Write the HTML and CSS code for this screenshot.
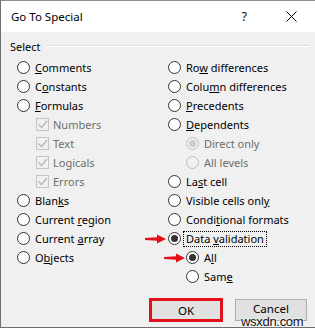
FILE: index.html
```html
<!DOCTYPE html>
<html>
<head>
<meta charset="utf-8">
<link rel="stylesheet" href="styles.css">
</head>
<body>
<div class="dialog">
  <div class="titlebar">
    <span class="title">Go To Special</span>
    <span class="help">?</span>
    <svg class="close" width="11" height="11" viewBox="0 0 11 11"><path d="M0.5 0.5 L10.5 10.5 M10.5 0.5 L0.5 10.5" stroke="#000" stroke-width="1" fill="none"/></svg>
  </div>
  <div class="body">
    <div class="group-label"><span>Select</span><div class="rule"></div></div>
    <div class="grid">
      <div class="col left">
        <div class="opt"><span class="radio"></span><span class="lbl"><u>C</u>omments</span></div>
        <div class="opt"><span class="radio"></span><span class="lbl">C<u>o</u>nstants</span></div>
        <div class="opt"><span class="radio"></span><span class="lbl"><u>F</u>ormulas</span></div>
        <div class="opt sub dis"><span class="check"><svg width="11" height="11" viewBox="0 0 11 11"><path d="M1.5 5.5 L4.5 8.5 L10 2" stroke="#b5b5b5" stroke-width="1.2" fill="none"/></svg></span><span class="lbl">Numbers</span></div>
        <div class="opt sub dis"><span class="check"><svg width="11" height="11" viewBox="0 0 11 11"><path d="M1.5 5.5 L4.5 8.5 L10 2" stroke="#b5b5b5" stroke-width="1.2" fill="none"/></svg></span><span class="lbl">Text</span></div>
        <div class="opt sub dis"><span class="check"><svg width="11" height="11" viewBox="0 0 11 11"><path d="M1.5 5.5 L4.5 8.5 L10 2" stroke="#b5b5b5" stroke-width="1.2" fill="none"/></svg></span><span class="lbl">Logicals</span></div>
        <div class="opt sub dis"><span class="check"><svg width="11" height="11" viewBox="0 0 11 11"><path d="M1.5 5.5 L4.5 8.5 L10 2" stroke="#b5b5b5" stroke-width="1.2" fill="none"/></svg></span><span class="lbl">Errors</span></div>
        <div class="opt"><span class="radio"></span><span class="lbl">Blan<u>k</u>s</span></div>
        <div class="opt"><span class="radio"></span><span class="lbl">Current <u>r</u>egion</span></div>
        <div class="opt"><span class="radio"></span><span class="lbl">Current <u>a</u>rray</span></div>
        <div class="opt"><span class="radio"></span><span class="lbl">O<u>b</u>jects</span></div>
      </div>
      <div class="col right">
        <div class="opt"><span class="radio"></span><span class="lbl">Ro<u>w</u> differences</span></div>
        <div class="opt"><span class="radio"></span><span class="lbl">Colu<u>m</u>n differences</span></div>
        <div class="opt"><span class="radio"></span><span class="lbl"><u>P</u>recedents</span></div>
        <div class="opt"><span class="radio"></span><span class="lbl"><u>D</u>ependents</span></div>
        <div class="opt sub dis"><span class="radio on"></span><span class="lbl">Direct only</span></div>
        <div class="opt sub dis"><span class="radio"></span><span class="lbl">All levels</span></div>
        <div class="opt"><span class="radio"></span><span class="lbl">La<u>s</u>t cell</span></div>
        <div class="opt"><span class="radio"></span><span class="lbl">Visible cells onl<u>y</u></span></div>
        <div class="opt"><span class="radio"></span><span class="lbl">Condi<u>t</u>ional formats</span></div>
        <div class="opt marked"><svg class="arrow a1" width="21" height="10" viewBox="0 0 21 10"><path d="M0 4 L12 3.2 L12 0.5 L21 5 L12 9.5 L12 6.8 L0 6 Z" fill="#e3101a"/></svg><span class="radio on"></span><span class="lbl focus">Data <u>v</u>alidation</span></div>
        <div class="opt sub marked"><svg class="arrow a2" width="21" height="10" viewBox="0 0 21 10"><path d="M0 4 L12 3.2 L12 0.5 L21 5 L12 9.5 L12 6.8 L0 6 Z" fill="#e3101a"/></svg><span class="radio on"></span><span class="lbl">A<u>l</u>l</span></div>
        <div class="opt sub"><span class="radio"></span><span class="lbl">Sam<u>e</u></span></div>
      </div>
    </div>
    <div class="buttons">
      <div class="btn ok">OK</div>
      <div class="btn cancel"><span class="cap">Cancel</span><span class="wm">wsxdn.com</span></div>
    </div>
  </div>
</div>
</body>
</html>
```

FILE: styles.css
```css
html, body { margin: 0; padding: 0; background: #fff; }
body {
  width: 315px;
  height: 332px;
  overflow: hidden;
  font-family: "Noto Sans", "DejaVu Sans", sans-serif;
  font-size: 11px;
  color: #000;
}
.dialog {
  width: 315px;
  box-sizing: border-box;
  border-top: 1px solid #8c8c8c;
  border-left: 1px solid #6e6e6e;
  border-bottom: 1px solid #6e6e6e;
  background: #f0f0f0;
}
.titlebar {
  height: 31px;
  background: #fff;
  display: flex;
  align-items: center;
  padding-left: 10px;
}
.title { font-size: 11.5px; flex: 1; }
.help { font-size: 12px; margin-right: 39px; }
.close { margin-right: 18px; }
.body {
  padding: 6px 8px 5px 16px;
}
.group-label {
  display: flex;
  align-items: center;
  height: 16px;
  margin-left: -7px;
  margin-bottom: 4px;
}
.group-label .rule {
  flex: 1;
  height: 0;
  border-top: 1px solid #dcdcdc;
  border-bottom: 1px solid #fff;
  margin-left: 6px;
  margin-right: -2px;
}
.grid {
  display: grid;
  grid-template-columns: 151px 1fr;
}
.opt {
  display: flex;
  align-items: center;
  height: 19px;
  position: relative;
}
.left .sub { padding-left: 19px; }
.right .sub { padding-left: 18px; }
.radio {
  flex: none;
  width: 13px;
  height: 13px;
  box-sizing: border-box;
  border: 1px solid #333;
  border-radius: 50%;
  background: #fff;
  margin-right: 5px;
  display: flex;
  align-items: center;
  justify-content: center;
}
.radio.on::after {
  content: "";
  width: 7px;
  height: 7px;
  border-radius: 50%;
  background: #333;
}
.dis .radio { border-color: #bcbcbc; background: #f0f0f0; }
.dis .radio.on::after { background: #cccccc; }
.dis .lbl { color: #6d6d6d; }
.check {
  flex: none;
  width: 13px;
  height: 13px;
  box-sizing: border-box;
  border: 1px solid #c4c4c4;
  background: #f0f0f0;
  margin-right: 4px;
  display: flex;
  align-items: center;
  justify-content: center;
}
u { text-decoration: underline; text-underline-offset: 1px; }
.focus {
  border: 1px dotted #000;
  padding: 0 2px 0 2px;
  margin-left: -3px;
  line-height: 14px;
}
.arrow { position: absolute; top: 4.5px; }
.a1 { left: -23px; }
.a2 { left: -4px; }
.buttons {
  display: flex;
  justify-content: flex-end;
  align-items: center;
  gap: 12px;
  margin-top: 12px;
}
.btn {
  box-sizing: border-box;
  height: 22px;
  background: #e1e1e1;
  display: flex;
  align-items: center;
  justify-content: center;
  font-size: 11.5px;
  position: relative;
}
.ok {
  width: 74px;
  height: 24px;
  border: 3px solid #e3101a;
}
.cancel {
  width: 72px;
  border: 1px solid #adadad;
}
.cap { position: relative; top: -2px; }
.wm {
  position: absolute;
  left: 5px;
  top: 15px;
  font-family: "Liberation Sans", Arial, sans-serif;
  font-size: 13px;
  line-height: 13px;
  letter-spacing: -0.3px;
  color: #111;
  text-shadow: 0 0 2px #fff, 0 0 2px #fff;
}
```
